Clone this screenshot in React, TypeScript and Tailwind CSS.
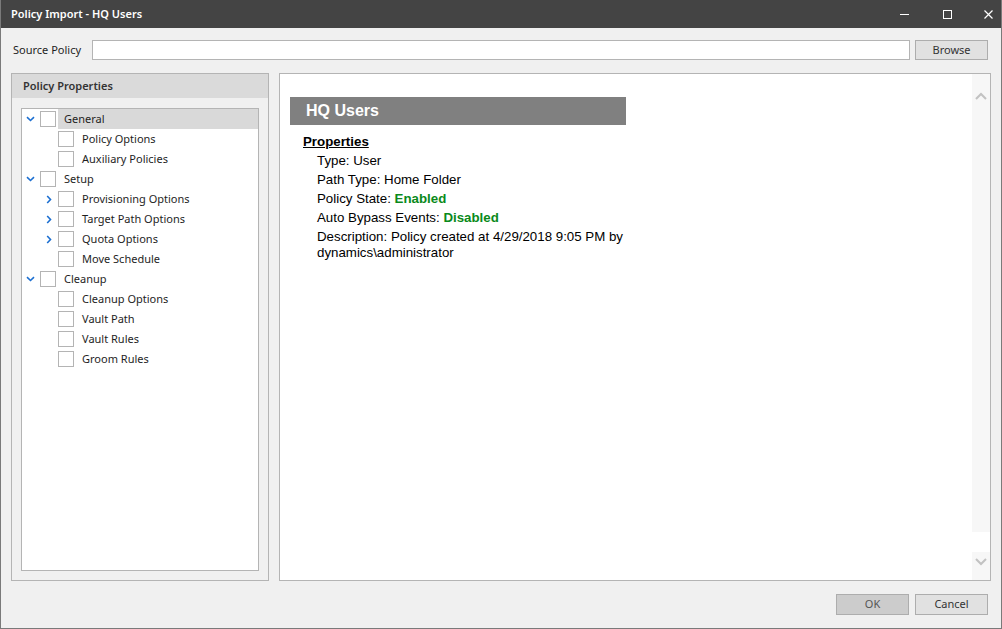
import React from "react";

const F = { fontFamily: '"Noto Sans", "Open Sans", sans-serif' } as React.CSSProperties;
const A = { fontFamily: '"Liberation Sans", Arial, sans-serif' } as React.CSSProperties;

function ChevDown() {
  return (
    <svg width="9" height="6" viewBox="0 0 9 6">
      <path d="M1 1.2 L4.5 4.5 L8 1.2" stroke="#1c6fd1" strokeWidth="1.6" fill="none" />
    </svg>
  );
}
function ChevRight() {
  return (
    <svg width="6" height="9" viewBox="0 0 6 9">
      <path d="M1.2 1 L4.5 4.5 L1.2 8" stroke="#1c6fd1" strokeWidth="1.6" fill="none" />
    </svg>
  );
}

type Node = { label: string; level: 0 | 1; exp?: "down" | "right"; sel?: boolean };

const nodes: Node[] = [
  { label: "General", level: 0, exp: "down", sel: true },
  { label: "Policy Options", level: 1 },
  { label: "Auxiliary Policies", level: 1 },
  { label: "Setup", level: 0, exp: "down" },
  { label: "Provisioning Options", level: 1, exp: "right" },
  { label: "Target Path Options", level: 1, exp: "right" },
  { label: "Quota Options", level: 1, exp: "right" },
  { label: "Move Schedule", level: 1 },
  { label: "Cleanup", level: 0, exp: "down" },
  { label: "Cleanup Options", level: 1 },
  { label: "Vault Path", level: 1 },
  { label: "Vault Rules", level: 1 },
  { label: "Groom Rules", level: 1 },
];

function TreeRow({ n }: { n: Node }) {
  const indent = n.level === 0 ? "pl-[4px]" : "pl-[22px]";
  return (
    <div className={`flex h-[20px] items-center ${indent}`}>
      <div className="flex w-[9px] items-center justify-center">
        {n.exp === "down" ? <ChevDown /> : n.exp === "right" ? <ChevRight /> : null}
      </div>
      <div className="ml-[5px] h-[16px] w-[16px] border border-[#b4b4b4] bg-white" />
      <div
        className={`ml-[2px] flex h-[20px] flex-1 items-center pl-[6px] text-[11px] text-[#1e1e1e] ${
          n.sel ? "bg-[#d9d9d9]" : ""
        }`}
        style={F}
      >
        {n.label}
      </div>
    </div>
  );
}

export default function App() {
  return (
    <div className="flex h-[629px] w-[1002px] flex-col overflow-hidden border-x border-b border-[#7a7a7a] bg-[#f0f0f0]">
      {/* title bar */}
      <div className="flex h-[28px] shrink-0 items-center bg-[#444444] pl-[10px]">
        <span className="text-[11px] font-semibold text-white" style={F}>
          Policy Import - HQ Users
        </span>
        <div className="ml-auto flex h-full items-center pr-[8px]">
          <div className="flex h-[9px] w-[9px] items-center">
            <div className="h-[1px] w-[9px] bg-white" />
          </div>
          <div className="ml-[34px] h-[9px] w-[9px] border border-white" />
          <svg className="ml-[32px]" width="9" height="9" viewBox="0 0 9 9">
            <path d="M0.5 0.5 L8.5 8.5 M8.5 0.5 L0.5 8.5" stroke="white" strokeWidth="1.2" />
          </svg>
        </div>
      </div>

      {/* source policy row */}
      <div className="mt-[12px] flex h-[20px] items-center pl-[12px] pr-[13px]">
        <span className="w-[79px] text-[11px] text-[#1e1e1e]" style={F}>
          Source Policy
        </span>
        <div className="h-[20px] flex-1 border border-[#b4b4b4] bg-white" />
        <div
          className="ml-[5px] flex h-[20px] w-[73px] items-center justify-center border border-[#adadad] bg-[#e1e1e1] text-[11px] text-[#333]"
          style={F}
        >
          Browse
        </div>
      </div>

      {/* panels */}
      <div className="mt-[13px] flex h-[508px] px-[10px]">
        <div className="flex w-[258px] flex-col border border-[#b4b4b4] bg-[#f0f0f0]">
          <div
            className="flex h-[24px] items-center bg-[#dadada] pl-[11px] text-[11px] font-semibold text-[#333]"
            style={F}
          >
            Policy Properties
          </div>
          <div className="mx-[9px] mb-[9px] mt-[10px] flex-1 border border-[#b4b4b4] bg-white">
            {nodes.map((n) => (
              <TreeRow key={n.label} n={n} />
            ))}
          </div>
        </div>

        <div className="ml-[10px] flex flex-1 border border-[#b4b4b4] bg-white">
          <div className="flex-1 pl-[10px] pt-[23px]" style={A}>
            <div className="flex h-[28px] w-[336px] items-center bg-[#808080] pl-[16px] text-[16px] font-bold text-white">
              HQ Users
            </div>
            <div className="mt-[7px] pl-[13px] text-[13.3px] leading-[19px] text-black">
              <div className="font-bold underline">Properties</div>
              <div className="pl-[14px]">
                <div>Type: User</div>
                <div>Path Type: Home Folder</div>
                <div>
                  Policy State: <span className="font-bold text-[#0a8a1a]">Enabled</span>
                </div>
                <div>
                  Auto Bypass Events: <span className="font-bold text-[#0a8a1a]">Disabled</span>
                </div>
                <div className="mt-[2px] w-[330px] leading-[16px]">
                  Description: Policy created at 4/29/2018 9:05 PM by dynamics\administrator
                </div>
              </div>
            </div>
          </div>
          <div className="flex w-[18px] flex-col items-center bg-[#f7f7f7]">
            <div className="flex h-[26px] items-end justify-center">
              <svg width="12" height="8" viewBox="0 0 12 8">
                <path d="M1 7 L6 2 L11 7" stroke="#c2c2c2" strokeWidth="2" fill="none" />
              </svg>
            </div>
            <div className="flex-1" />
            <div className="h-[20px] w-full bg-white" />
            <div className="flex h-[28px] items-start justify-center pt-[6px]">
              <svg width="12" height="8" viewBox="0 0 12 8">
                <path d="M1 1 L6 6 L11 1" stroke="#c2c2c2" strokeWidth="2" fill="none" />
              </svg>
            </div>
          </div>
        </div>
      </div>

      {/* buttons */}
      <div className="mt-[13px] flex justify-end gap-[6px] pr-[13px]">
        <div
          className="flex h-[21px] w-[73px] items-center justify-center border border-[#adadad] bg-[#cccccc] text-[11px] text-[#555]"
          style={F}
        >
          OK
        </div>
        <div
          className="flex h-[21px] w-[73px] items-center justify-center border border-[#adadad] bg-[#e1e1e1] text-[11px] text-[#333]"
          style={F}
        >
          Cancel
        </div>
      </div>
    </div>
  );
}
